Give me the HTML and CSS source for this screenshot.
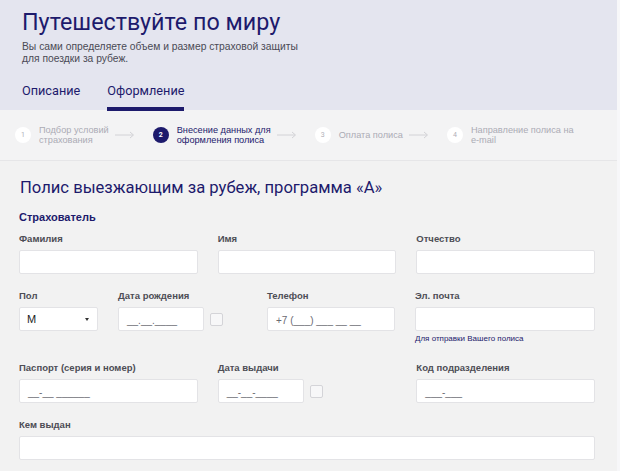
FILE: index.html
```html
<!DOCTYPE html>
<html lang="ru">
<head>
<meta charset="utf-8">
<title>Путешествуйте по миру</title>
<link rel="stylesheet" href="styles.css">
</head>
<body>
<div class="page">
  <header class="hero">
    <h1 class="hero-title">Путешествуйте по миру</h1>
    <p class="hero-sub">Вы сами определяете объем и размер страховой защиты<br>для поездки за рубеж.</p>
    <nav class="tabs">
      <a class="tab">Описание</a>
      <a class="tab tab-active">Оформление</a>
    </nav>
  </header>

  <div class="steps">
    <div class="step">
      <span class="num">1</span>
      <span class="step-text">Подбор условий<br>страхования</span>
    </div>
    <svg class="arrow" width="20" height="8" viewBox="0 0 20 8"><path d="M0 4H18M15 1L18.5 4L15 7" fill="none" stroke="#d2d2d6" stroke-width="1"/></svg>
    <div class="step step-current">
      <span class="num">2</span>
      <span class="step-text">Внесение данных для<br>оформления полиса</span>
    </div>
    <svg class="arrow" width="20" height="8" viewBox="0 0 20 8"><path d="M0 4H18M15 1L18.5 4L15 7" fill="none" stroke="#d2d2d6" stroke-width="1"/></svg>
    <div class="step">
      <span class="num">3</span>
      <span class="step-text">Оплата полиса</span>
    </div>
    <svg class="arrow" width="20" height="8" viewBox="0 0 20 8"><path d="M0 4H18M15 1L18.5 4L15 7" fill="none" stroke="#d2d2d6" stroke-width="1"/></svg>
    <div class="step">
      <span class="num">4</span>
      <span class="step-text">Направление полиса на<br>e-mail</span>
    </div>
  </div>

  <main class="form">
    <h2 class="form-title">Полис выезжающим за рубеж, программа «А»</h2>
    <h3 class="section-title">Страхователь</h3>

    <div class="row row-3">
      <div class="field"><label class="label">Фамилия</label><div class="input"></div></div>
      <div class="field"><label class="label">Имя</label><div class="input"></div></div>
      <div class="field"><label class="label">Отчество</label><div class="input"></div></div>
    </div>

    <div class="row row-2">
      <div class="field f-sex"><label class="label">Пол</label><div class="input select"><span>М</span><span class="caret"></span></div></div>
      <div class="field f-date"><label class="label">Дата рождения</label><div class="date-wrap"><div class="input ph">__.__.____</div><span class="cal"></span></div></div>
      <div class="field f-phone"><label class="label">Телефон</label><div class="input ph">+7 (___) ___ __ __</div></div>
      <div class="field f-mail"><label class="label">Эл. почта</label><div class="input"></div><div class="hint">Для отправки Вашего полиса</div></div>
    </div>

    <div class="row row-3">
      <div class="field"><label class="label">Паспорт (серия и номер)</label><div class="input ph">__-__ ______</div></div>
      <div class="field"><label class="label">Дата выдачи</label><div class="date-wrap"><div class="input ph">__-__-____</div><span class="cal"></span></div></div>
      <div class="field"><label class="label">Код подразделения</label><div class="input ph">___-___</div></div>
    </div>

    <div class="row row-1">
      <div class="field"><label class="label">Кем выдан</label><div class="input"></div></div>
    </div>
  </main>
</div>
</body>
</html>
```

FILE: styles.css
```css
* { box-sizing: border-box; }
html, body { margin: 0; padding: 0; }
body {
  background: #f7f7f9;
  font-family: Roboto, "Noto Sans", sans-serif;
  overflow: hidden;
}
.page {
  width: 617px;
  background: #f2f2f2;
  min-height: 471px;
}
.hero {
  background: #e4e5ef;
  padding: 8px 22px 0;
  height: 110px;
}
.hero-title {
  margin: 0;
  font-size: 23.3px;
  font-weight: 400;
  line-height: 28px;
  color: #1d1a6c;
}
.hero-sub {
  margin: 5px 0 0;
  font-family: "Liberation Sans", Arial, sans-serif;
  font-size: 10.3px;
  line-height: 12px;
  color: #4a4a55;
}
.tabs {
  display: flex;
  gap: 27px;
  margin-top: 17px;
}
.tab {
  font-size: 12.7px;
  line-height: 18px;
  color: #1d1a6c;
  padding-bottom: 7px;
  border-bottom: 4px solid transparent;
}
.tab-active { border-bottom-color: #1d1a6c; }

.steps {
  display: flex;
  align-items: center;
  height: 51px;
  padding: 0 0 0 15px;
  border-bottom: 1px solid #e6e6e8;
  background: #f3f3f4;
}
.step {
  display: flex;
  align-items: center;
  gap: 8px;
  color: #ababb4;
  white-space: nowrap;
}
.num {
  width: 16px;
  height: 16px;
  border-radius: 50%;
  background: #fff;
  color: #b0b0b8;
  font-size: 7px;
  display: flex;
  align-items: center;
  justify-content: center;
  flex: none;
}
.step-text {
  font-family: "Liberation Sans", Arial, sans-serif;
  font-size: 9.2px;
  line-height: 10px;
}
.step-current { color: #1d1a6c; }
.step-current .num { background: #1d1a6c; color: #fff; font-weight: 700; }
.arrow { margin: 0 18px 0 6px; flex: none; }

.form { padding: 16px 22px 0 19px; }
.form-title {
  margin: 0 0 0 1px;
  font-size: 16.6px;
  font-weight: 400;
  line-height: 22px;
  color: #1d1a6c;
}
.section-title {
  margin: 12px 0 10px;
  font-family: "Liberation Sans", Arial, sans-serif;
  font-size: 11px;
  font-weight: 700;
  line-height: 12px;
  color: #1d1a6c;
}
.row { display: flex; gap: 20px; margin-bottom: 16px; }
.row-3 { display: grid; grid-template-columns: repeat(3, 1fr); }
.row-2 { margin-bottom: 18px; }
.row-1 .field { flex: 1; }
.field { display: flex; flex-direction: column; }
.label {
  font-family: "Liberation Sans", Arial, sans-serif;
  font-size: 9.5px;
  font-weight: 700;
  line-height: 12px;
  color: #4d4d55;
  margin-bottom: 5px;
}
.input {
  height: 24px;
  background: #fff;
  border: 1px solid #e3e3e6;
  border-radius: 2px;
}
.ph {
  padding: 0 8px;
  font-size: 10px;
  line-height: 26px;
  color: #6a6a72;
  font-family: "Liberation Sans", Arial, sans-serif;
}
.select {
  display: flex;
  align-items: center;
  justify-content: space-between;
  padding: 0 8px 0 7px;
  font-family: "Liberation Sans", Arial, sans-serif;
  font-size: 11px;
  color: #222;
}
.caret {
  width: 0; height: 0;
  border-left: 2.5px solid transparent;
  border-right: 2.5px solid transparent;
  border-top: 3px solid #333;
}
.f-sex { width: 79px; flex: none; }
.f-date { width: 129px; flex: none; }
.f-phone { width: 128px; flex: none; }
.f-mail { flex: 1; }
.date-wrap { display: flex; align-items: center; gap: 6px; }
.date-wrap .input { width: 86px; flex: none; }
.cal {
  width: 13px;
  height: 13px;
  border: 1px solid #d4d4d8;
  border-radius: 2px;
  background: #f7f7f8;
  flex: none;
}
.hint {
  margin-top: 3px;
  font-family: "Liberation Sans", Arial, sans-serif;
  font-size: 8px;
  line-height: 10px;
  color: #1d1a6c;
}
```
